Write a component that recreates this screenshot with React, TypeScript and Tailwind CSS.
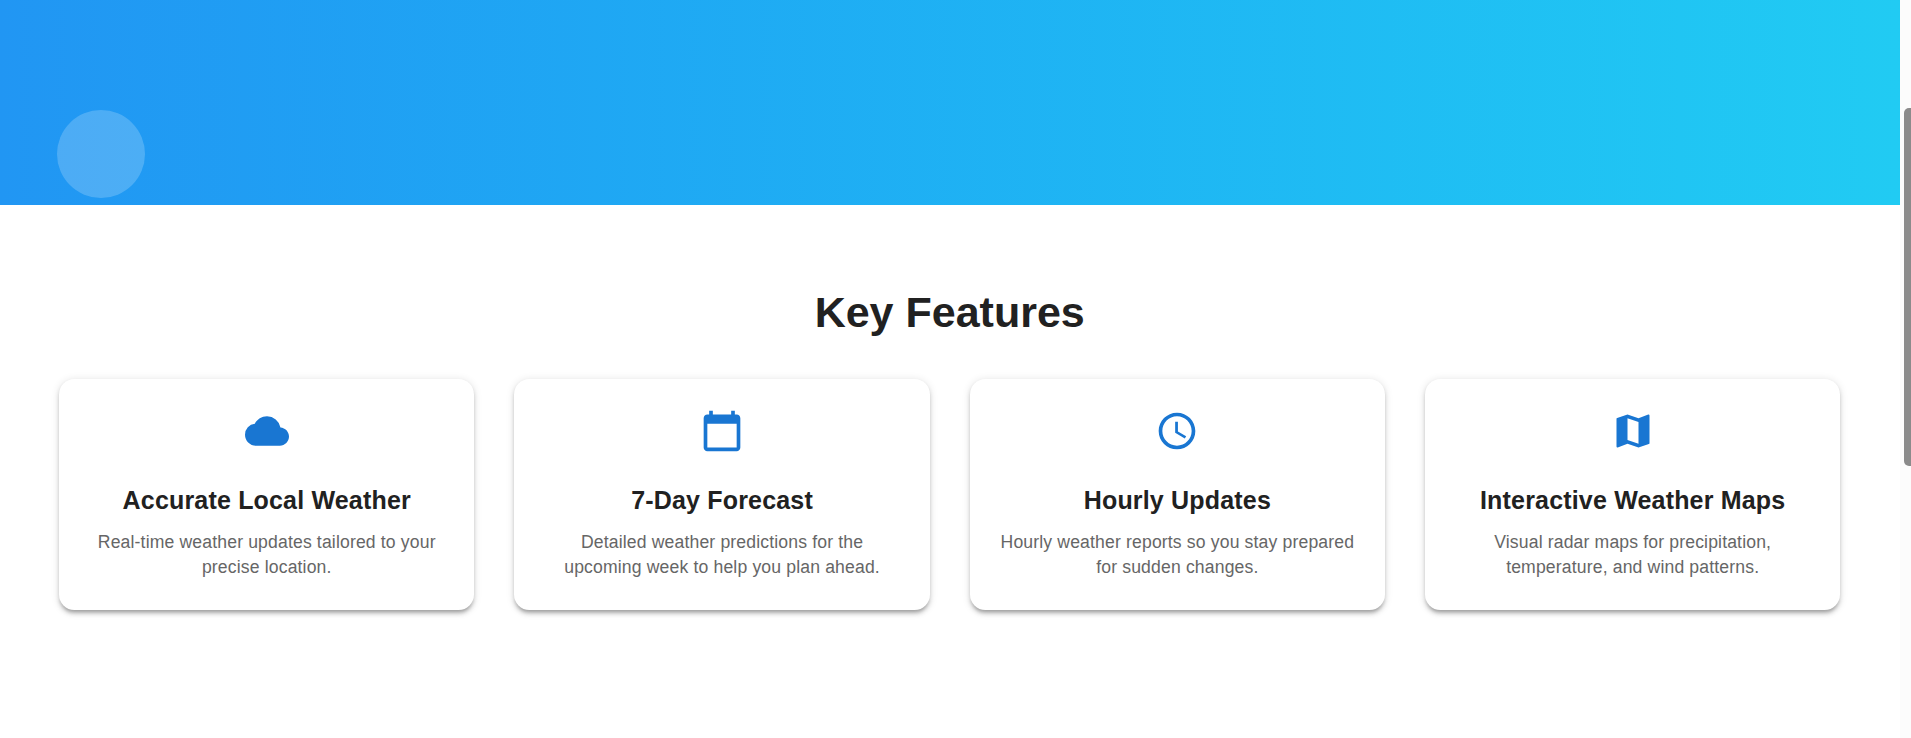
import { MdCloud, MdCalendarToday, MdAccessTime, MdMap } from "react-icons/md";

const features = [
  { icon: MdCloud, title: "Accurate Local Weather", text: "Real-time weather updates tailored to your precise location." },
  { icon: MdCalendarToday, title: "7-Day Forecast", text: "Detailed weather predictions for the upcoming week to help you plan ahead." },
  { icon: MdAccessTime, title: "Hourly Updates", text: "Hourly weather reports so you stay prepared for sudden changes." },
  { icon: MdMap, title: "Interactive Weather Maps", text: "Visual radar maps for precipitation, temperature, and wind patterns." },
];

export default function App() {
  return (
    <div className="flex h-[738px] w-full overflow-hidden bg-white font-['Liberation_Sans',Arial,sans-serif]">
      <main className="w-[1900px] shrink-0">
        <section className="relative h-[205px] bg-linear-to-r from-[#2196f3] to-[#21cbf3]">
          <div className="absolute top-[110px] left-[57px] size-[88px] rounded-full bg-white/20" />
        </section>
        <section className="pt-[77px] pr-[59.7px] pl-[59.1px]">
          <h2 className="text-center text-[43px] leading-[61px] font-bold text-[#212121]">Key Features</h2>
          <div className="mt-[36px] grid grid-cols-4 gap-[40px]">
            {features.map(({ icon: Icon, title, text }) => (
              <article
                key={title}
                className="flex h-[231px] flex-col items-center rounded-[15.4px] bg-white px-[26px] pt-[29.7px] text-center shadow-[0_3.3px_3.3px_-2.2px_rgba(0,0,0,0.2),0_3.3px_4.4px_rgba(0,0,0,0.14),0_1.1px_8.8px_rgba(0,0,0,0.12)]"
              >
                <Icon className="size-[44px] text-[#1976d2]" />
                <h3 className="mt-[26.9px] text-[25px] leading-[40px] font-bold tracking-[0.18px] whitespace-nowrap text-[#212121]">{title}</h3>
                <p className="mt-[10.4px] text-[17.6px] leading-[25px] tracking-[0.15px] text-[#666666]">{text}</p>
              </article>
            ))}
          </div>
        </section>
      </main>
      <div className="flex flex-1 flex-col bg-[#fcfcfc] pt-[108px] pl-1">
        <div className="h-[358px] rounded-l-[5px] bg-[#8b8b8b]" />
      </div>
    </div>
  );
}
